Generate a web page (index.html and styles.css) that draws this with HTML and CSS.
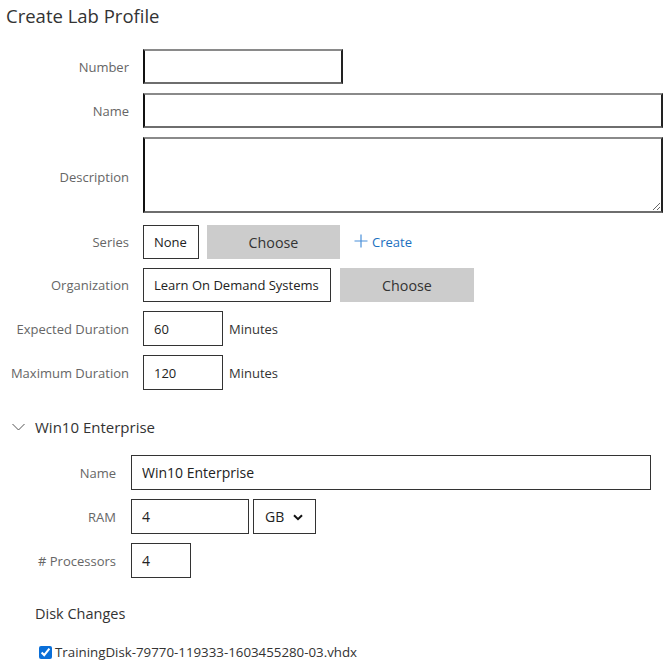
FILE: index.html
```html
<!DOCTYPE html>
<html>
<head>
<meta charset="utf-8">
<link rel="stylesheet" href="styles.css">
</head>
<body>
<div class="page">
  <h1 class="title">Create Lab Profile</h1>

  <div class="form main">
    <div class="lbl">Number</div>
    <div class="ctl"><input class="txt inset w-number" type="text"></div>

    <div class="lbl">Name</div>
    <div class="ctl"><input class="txt inset w-full" type="text"></div>

    <div class="lbl">Description</div>
    <div class="ctl desc-ctl"><textarea class="txt inset w-full area"></textarea></div>

    <div class="lbl">Series</div>
    <div class="ctl row">
      <div class="box w-none">None</div>
      <button class="choose w-choose1">Choose</button>
      <a class="create" href="#">
        <svg class="plus" width="14" height="14" viewBox="0 0 14 14"><path d="M7 0.5V13.5M0.5 7H13.5" stroke="#4a90d9" stroke-width="1.2" fill="none"/></svg>
        <span>Create</span>
      </a>
    </div>

    <div class="lbl">Organization</div>
    <div class="ctl row">
      <div class="box w-org">Learn On Demand Systems</div>
      <button class="choose w-choose2">Choose</button>
    </div>

    <div class="lbl">Expected Duration</div>
    <div class="ctl row">
      <input class="txt plain w-dur" type="text" value="60">
      <span class="unit">Minutes</span>
    </div>

    <div class="lbl">Maximum Duration</div>
    <div class="ctl row">
      <input class="txt plain w-dur" type="text" value="120">
      <span class="unit">Minutes</span>
    </div>
  </div>

  <div class="vm">
    <div class="vm-head">
      <svg class="chev" width="13" height="8" viewBox="0 0 13 8"><path d="M0.5 1L6.5 7L12.5 1" stroke="#555" stroke-width="1" fill="none"/></svg>
      <span class="vm-title">Win10 Enterprise</span>
    </div>

    <div class="form sub">
      <div class="lbl">Name</div>
      <div class="ctl"><input class="txt plain big w-full" type="text" value="Win10 Enterprise"></div>

      <div class="lbl">RAM</div>
      <div class="ctl row ram-row">
        <input class="txt plain big w-ram" type="text" value="4">
        <div class="select-wrap">
          <select class="sel">
            <option>GB</option>
            <option>MB</option>
          </select>
          <svg class="sel-chev" width="10" height="7" viewBox="0 0 10 7"><path d="M1 1.2L5 5.2L9 1.2" stroke="#111" stroke-width="2" fill="none"/></svg>
        </div>
      </div>

      <div class="lbl"># Processors</div>
      <div class="ctl"><input class="txt plain big w-proc" type="text" value="4"></div>
    </div>

    <div class="disk-title">Disk Changes</div>
    <label class="disk">
      <input class="chk" type="checkbox" checked>
      <span>TrainingDisk-79770-119333-1603455280-03.vhdx</span>
    </label>
  </div>
</div>
</body>
</html>
```

FILE: styles.css
```css
* { box-sizing: border-box; }

html, body {
  margin: 0;
  padding: 0;
  background: #fff;
}

body {
  font-family: "Open Sans", "Noto Sans", sans-serif;
  font-size: 13px;
  color: #333;
}

.page {
  width: 667px;
  padding: 0 4px 0 0;
}

.title {
  margin: 0;
  padding: 0 0 0 6px;
  font-size: 18.5px;
  font-weight: 400;
  line-height: 31px;
  color: #333;
}

.form {
  display: grid;
  row-gap: 9px;
  align-items: center;
}

.form.main {
  grid-template-columns: 129px 520px;
  column-gap: 14px;
  margin-top: 18px;
}

.form.sub {
  grid-template-columns: 116px 520px;
  column-gap: 15px;
  margin-top: 17px;
}

.lbl {
  text-align: right;
  color: #666;
  white-space: nowrap;
}

.ctl {
  display: flex;
  align-items: center;
}

.row {
  gap: 8px;
}

.desc-ctl {
  margin-bottom: 3px;
}

.txt {
  font-family: inherit;
  font-size: 13px;
  color: #222;
  background: #fff;
  margin: 0;
  padding: 0 10px;
  outline: none;
  border-radius: 0;
}

.txt.big {
  font-size: 14px;
}

.inset {
  height: 35px;
  border-style: solid;
  border-width: 2px;
  border-color: #8a8a8a #222 #6e6e6e #111;
}

.plain {
  height: 35px;
  border: 1px solid #333;
}

.area {
  height: 76px;
  resize: both;
  padding: 6px 10px;
  display: block;
}

.w-number { width: 200px; }
.w-full { width: 520px; }
.w-dur { width: 80px; }
.w-ram { width: 118px; }
.w-proc { width: 60px; }

.box {
  height: 34px;
  border: 1px solid #333;
  display: flex;
  align-items: center;
  padding: 0 10px;
  color: #222;
  white-space: nowrap;
}

.w-none { width: 56px; }
.w-org { width: 188px; }

.choose {
  height: 34px;
  border: none;
  background: #cccccc;
  font-family: inherit;
  font-size: 14.3px;
  color: #333;
  padding: 0;
  margin: 0;
}

.w-choose1 { width: 133px; }
.w-choose2 { width: 134px; margin-left: 1px; }

.create {
  display: flex;
  align-items: center;
  gap: 4px;
  margin-left: 6px;
  color: #1a6fc0;
  text-decoration: none;
}

.plus { display: block; margin-top: -2px; }

.unit {
  margin-left: -2px;
  color: #333;
}

.vm {
  margin-top: 26px;
}

.vm-head {
  display: flex;
  align-items: center;
  height: 22px;
  padding-left: 12px;
  gap: 10px;
}

.chev { display: block; }

.vm-title {
  font-size: 15px;
  color: #333;
}

.ram-row { gap: 4px; }

.select-wrap {
  position: relative;
  width: 63px;
  height: 35px;
}

.sel {
  appearance: none;
  -webkit-appearance: none;
  width: 63px;
  height: 35px;
  border: 1px solid #333;
  border-radius: 0;
  background: #fff;
  font-family: inherit;
  font-size: 14px;
  color: #222;
  padding: 0 0 0 11px;
  margin: 0;
  outline: none;
}

.sel-chev {
  position: absolute;
  right: 13px;
  top: 15px;
  pointer-events: none;
}

.disk-title {
  margin-top: 26px;
  padding-left: 35px;
  font-size: 14.5px;
  color: #333;
  line-height: 20px;
}

.disk {
  display: flex;
  align-items: center;
  margin-top: 19px;
  padding-left: 39px;
  color: #333;
  font-size: 13.3px;
}

.chk {
  width: 13px;
  height: 13px;
  margin: 0 3px 0 0;
  accent-color: #0a6fd8;
}
```
